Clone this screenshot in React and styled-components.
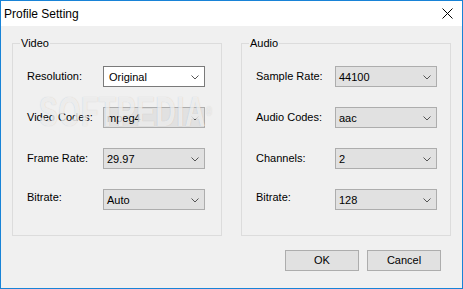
import React from "react";
import styled, { createGlobalStyle } from "styled-components";

const Global = createGlobalStyle`
  html, body { margin: 0; padding: 0; background: #ffffff; }
  * { box-sizing: border-box; }
`;

const Window = styled.div`
  position: relative;
  width: 463px;
  height: 289px;
  border: 1px solid #1883d7;
  background: #f0f0f0;
  display: flex;
  flex-direction: column;
  font-family: "Liberation Sans", Arial, sans-serif;
  color: #000;
  overflow: hidden;
`;

const TitleBar = styled.div`
  height: 25px;
  background: #ffffff;
  display: flex;
  align-items: center;
  justify-content: space-between;
  padding: 0 9px 0 3px;
`;

const Title = styled.span`
  font-size: 12px;
  line-height: 14px;
`;

const CloseIcon = styled.svg`
  width: 11px;
  height: 11px;
  display: block;
`;

const Body = styled.div`
  flex: 1;
  display: flex;
  flex-direction: column;
  padding: 17px 11px 0 11px;
`;

const Groups = styled.div`
  display: flex;
  gap: 19px;
`;

const GroupBox = styled.div`
  position: relative;
  width: 210px;
  height: 193px;
  border: 1px solid #dcdcdc;
  display: flex;
  flex-direction: column;
  gap: 20px;
  padding: 22px 0 0 14px;
`;

const Legend = styled.span`
  position: absolute;
  top: -7px;
  left: 7px;
  padding: 0 1px;
  background: #f0f0f0;
  font-size: 11px;
  line-height: 13px;
`;

const Row = styled.div`
  display: flex;
  align-items: center;
  height: 21px;
`;

const Label = styled.span`
  width: ${(p) => p.$w}px;
  font-size: 11px;
  line-height: 13px;
  margin-top: ${(p) => (p.$up ? -4 : 0)}px;
`;

const Select = styled.div`
  width: 102px;
  height: 21px;
  border: 1px solid ${(p) => (p.$active ? "#7a7a7a" : "#adadad")};
  background: ${(p) => (p.$active ? "#ffffff" : "#e1e1e1")};
  display: flex;
  align-items: center;
  justify-content: space-between;
  padding: 1px 5px 0 ${(p) => (p.$active ? 5 : 3)}px;
  font-size: 11px;
  line-height: 13px;
`;

const Chevron = styled.svg`
  width: 8px;
  height: 5px;
  display: block;
`;

const Buttons = styled.div`
  display: flex;
  justify-content: flex-end;
  gap: 8px;
  margin-top: 14px;
  padding-right: 10px;
`;

const Button = styled.div`
  width: 74px;
  height: 21px;
  border: 1px solid #adadad;
  background: #e1e1e1;
  display: flex;
  align-items: center;
  justify-content: center;
  font-size: 11px;
  line-height: 13px;
`;

const Watermark = styled.div`
  position: absolute;
  left: 38px;
  top: 90px;
  font-family: "Liberation Sans", Arial, sans-serif;
  font-weight: bold;
  font-size: 42px;
  line-height: 42px;
  letter-spacing: 1px;
  color: rgba(255, 255, 255, 0.7);
  text-shadow: 0 0 1px rgba(140, 140, 140, 0.45);
  transform: scaleX(0.67);
  transform-origin: left top;
  pointer-events: none;
  white-space: nowrap;
`;

const Reg = styled.sup`
  font-size: 12px;
  vertical-align: top;
  font-weight: normal;
`;

const ChevronIcon = () => (
  <Chevron viewBox="0 0 8 5">
    <polyline points="0.5,0.5 4,4 7.5,0.5" fill="none" stroke="#555" strokeWidth="1" />
  </Chevron>
);

const Combo = ({ value, active }) => (
  <Select $active={active}>
    <span>{value}</span>
    <ChevronIcon />
  </Select>
);

const video = [
  ["Resolution:", "Original", true],
  ["Video Codes:", "mpeg4"],
  ["Frame Rate:", "29.97"],
  ["Bitrate:", "Auto", false, true],
];

const audio = [
  ["Sample Rate:", "44100"],
  ["Audio Codes:", "aac"],
  ["Channels:", "2"],
  ["Bitrate:", "128", false, true],
];

const Group = ({ title, rows, labelWidth }) => (
  <GroupBox>
    <Legend>{title}</Legend>
    {rows.map(([l, v, a, up]) => (
      <Row key={l}>
        <Label $w={labelWidth} $up={up}>{l}</Label>
        <Combo value={v} active={a} />
      </Row>
    ))}
  </GroupBox>
);

export default function App() {
  return (
    <>
      <Global />
      <Window>
        <TitleBar>
          <Title>Profile Setting</Title>
          <CloseIcon viewBox="0 0 11 11">
            <path d="M0.5 0.5 L10.5 10.5 M10.5 0.5 L0.5 10.5" stroke="#000" strokeWidth="1" />
          </CloseIcon>
        </TitleBar>
        <Body>
          <Groups>
            <Group title="Video" rows={video} labelWidth={76} />
            <Group title="Audio" rows={audio} labelWidth={79} />
          </Groups>
          <Buttons>
            <Button>OK</Button>
            <Button>Cancel</Button>
          </Buttons>
        </Body>
        <Watermark>
          SOFTPEDIA<Reg>®</Reg>
        </Watermark>
      </Window>
    </>
  );
}
